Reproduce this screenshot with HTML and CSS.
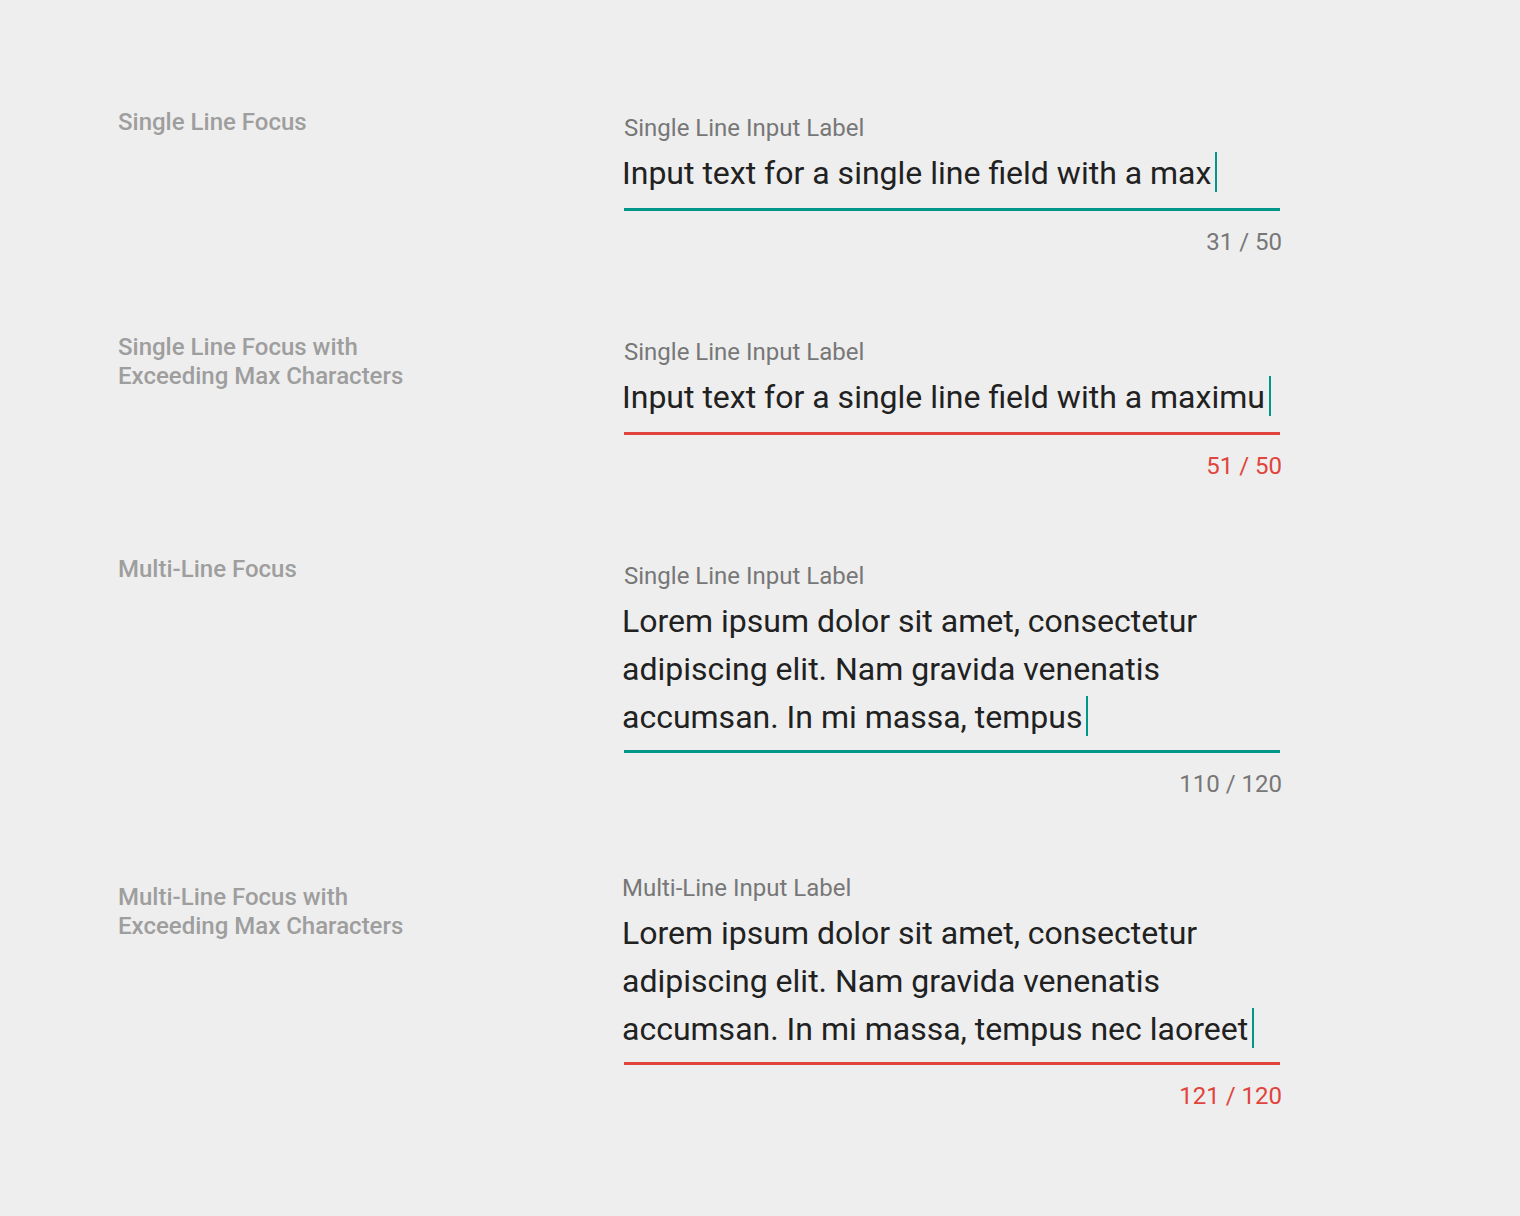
FILE: index.html
```html
<!DOCTYPE html>
<html>
<head>
<meta charset="utf-8">
<link rel="stylesheet" href="styles.css">
</head>
<body>
<div class="page">
  <div class="row row-one">
    <div class="desc">Single Line Focus</div>
    <div class="field">
      <div class="label">Single Line Input Label</div>
      <div class="value">Input text for a single line field with a max<span class="cursor"></span></div>
      <div class="line"></div>
      <div class="counter">31 / 50</div>
    </div>
  </div>
  <div class="row row-two">
    <div class="desc">Single Line Focus with<br>Exceeding Max Characters</div>
    <div class="field error">
      <div class="label">Single Line Input Label</div>
      <div class="value">Input text for a single line field with a maximu<span class="cursor"></span></div>
      <div class="line"></div>
      <div class="counter">51 / 50</div>
    </div>
  </div>
  <div class="row">
    <div class="desc">Multi-Line Focus</div>
    <div class="field multi">
      <div class="label">Single Line Input Label</div>
      <div class="value">Lorem ipsum dolor sit amet, consectetur<br>adipiscing elit. Nam gravida venenatis<br>accumsan. In mi massa, tempus<span class="cursor"></span></div>
      <div class="line"></div>
      <div class="counter">110 / 120</div>
    </div>
  </div>
  <div class="row row-last">
    <div class="desc">Multi-Line Focus with<br>Exceeding Max Characters</div>
    <div class="field multi error">
      <div class="label label-shift">Multi-Line Input Label</div>
      <div class="value">Lorem ipsum dolor sit amet, consectetur<br>adipiscing elit. Nam gravida venenatis<br>accumsan. In mi massa, tempus nec laoreet<span class="cursor"></span></div>
      <div class="line"></div>
      <div class="counter">121 / 120</div>
    </div>
  </div>
</div>
</body>
</html>
```
FILE: styles.css
```css
html, body {
  margin: 0;
  padding: 0;
  background: #eeeeee;
  font-family: Roboto, "Liberation Sans", sans-serif;
}
.page {
  padding: 107px 0 0 118px;
  display: flex;
  flex-direction: column;
  gap: 75px;
}
.row {
  display: flex;
  align-items: flex-start;
}
.row-last {
  margin-top: -6px;
}
.desc {
  width: 506px;
  flex: none;
  font-size: 24px;
  font-weight: 500;
  line-height: 29px;
  color: #9e9e9e;
}
.row-one .desc {
  margin-top: 1px;
}
.row-two .desc {
  margin-top: 2px;
}
.row-last .desc {
  margin-top: 16px;
}
.field {
  width: 656px;
  padding-top: 3px;
}
.label {
  font-size: 24px;
  line-height: 36px;
  color: #777777;
}
.label-shift {
  margin-left: -2px;
}
.value {
  font-size: 32px;
  line-height: 48px;
  color: #212121;
  margin-top: 3px;
  margin-left: -2px;
}
.cursor {
  display: inline-block;
  width: 2px;
  height: 40px;
  background: #009688;
  vertical-align: -8px;
  margin-left: 4px;
}
.line {
  height: 3px;
  background: #009688;
  margin-top: 11px;
}
.multi .line {
  margin-top: 9px;
}
.error .line {
  background: #e0443c;
}
.counter {
  text-align: right;
  font-size: 24px;
  line-height: 28px;
  color: #777777;
  margin-right: -2px;
  margin-top: 17px;
}
.error .counter {
  color: #e0443c;
}
```
